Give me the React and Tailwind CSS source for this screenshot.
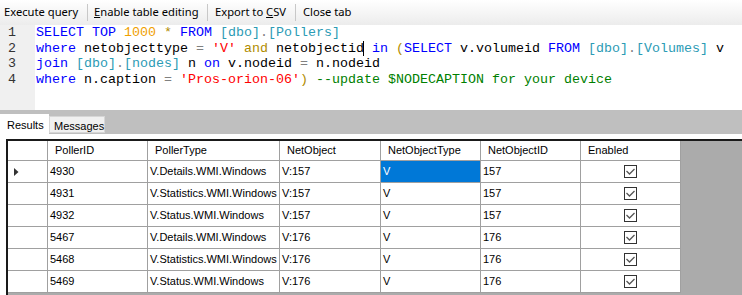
import React from "react";

const mono = { fontFamily: '"Liberation Mono", "Courier New", monospace' };
const sans = { fontFamily: '"Liberation Sans", Arial, sans-serif' };
const ui = { fontFamily: '"Noto Sans", "Segoe UI", sans-serif' };

const K = ({ children }) => <span className="text-[#0000ff]">{children}</span>;
const N = ({ children }) => <span className="text-[#f0a000]">{children}</span>;
const O = ({ children }) => <span className="text-[#b08c00]">{children}</span>;
const B = ({ children }) => <span className="text-[#2b9bb5]">{children}</span>;
const G = ({ children }) => <span className="text-[#808080]">{children}</span>;
const S = ({ children }) => <span className="text-[#ff0000]">{children}</span>;
const C = ({ children }) => <span className="text-[#008000]">{children}</span>;

const rows = [
  ["4930", "V.Details.WMI.Windows", "V:157", "V", "157"],
  ["4931", "V.Statistics.WMI.Windows", "V:157", "V", "157"],
  ["4932", "V.Status.WMI.Windows", "V:157", "V", "157"],
  ["5467", "V.Details.WMI.Windows", "V:176", "V", "176"],
  ["5468", "V.Statistics.WMI.Windows", "V:176", "V", "176"],
  ["5469", "V.Status.WMI.Windows", "V:176", "V", "176"],
];

const Sep = () => <div className="w-px h-[17px] bg-[#c8c8c8]" />;

const Check = () => (
  <div className="w-[13px] h-[13px] border border-[#333] bg-white flex items-center justify-center">
    <svg width="9" height="7" viewBox="0 0 9 7">
      <polyline points="0.5,3 3.5,6 8.5,1" fill="none" stroke="#555" strokeWidth="1.3" />
    </svg>
  </div>
);

const cell = "border-r border-b border-[#a0a0a0] flex items-center";

export default function App() {
  return (
    <div className="w-[742px] h-[295px] overflow-hidden bg-white flex flex-col text-black">
      {/* toolbar */}
      <div className="h-[25px] flex items-center pl-[4px] bg-gradient-to-b from-white to-[#ececec] text-[11.2px]" style={ui}>
        <span className="w-[83px]">Execute query</span>
        <Sep />
        <span className="ml-[6px] w-[113px]"><u>E</u>nable table editing</span>
        <Sep />
        <span className="ml-[7px] w-[80px]">Export to <u>C</u>SV</span>
        <Sep />
        <span className="ml-[7px]">Close tab</span>
      </div>

      {/* editor */}
      <div className="h-[85px] flex" style={mono}>
        <div className="w-[35px] bg-[#f0f0f0] pl-[8px] text-[13.33px] leading-[15.6px] text-[#333]">
          <div>1</div>
          <div>2</div>
          <div>3</div>
          <div>4</div>
        </div>
        <div className="pl-[1px] text-[13.33px] leading-[15.6px] whitespace-pre">
          <div>
            <K>SELECT</K> <K>TOP</K> <N>1000</N> <O>*</O> <K>FROM</K> <B>[dbo]</B><G>.</G><B>[Pollers]</B>
          </div>
          <div>
            <K>where</K> netobjecttype <G>=</G> <S>'V'</S> <O>and</O>{" "}
            <span className="relative">
              netobjectid
              <span className="absolute right-0 top-0 w-px h-full bg-black" />
            </span>{" "}
            <K>in</K> <O>(</O><K>SELECT</K> v.volumeid <K>FROM</K> <B>[dbo]</B><G>.</G><B>[Volumes]</B> v
          </div>
          <div>
            <K>join</K> <B>[dbo]</B><G>.</G><B>[nodes]</B> n <K>on</K> v.nodeid <G>=</G> n.nodeid
          </div>
          <div>
            <K>where</K> n.caption <G>=</G> <S>'Pros-orion-06'</S><O>)</O> <C>--update $NODECAPTION for your device</C>
          </div>
        </div>
      </div>

      {/* tab strip */}
      <div className="h-[24px] bg-[#bfbfbf] flex items-end text-[11px]" style={sans}>
        <div className="w-[49px] h-[20px] bg-white pl-[7px] pt-[3px]">Results</div>
        <div className="w-[56px] h-[17px] mb-px bg-[#f0f0f0] border border-[#d6d6d6] pl-[4px] pt-[1px]">Messages</div>
      </div>

      {/* grid */}
      <div className="flex-1 bg-white pt-[5px] pl-[6px] flex flex-col">
        <div className="flex-1 border-t-2 border-l-2 border-[#1a1a1a] bg-[#ababab] text-[11px]" style={sans}>
          <div className="grid grid-cols-[40px_100px_132px_101px_100px_100px_100px] w-[673px] bg-white">
            <div className={`${cell} h-[20px]`} />
            {["PollerID", "PollerType", "NetObject", "NetObjectType", "NetObjectID", "Enabled"].map((h) => (
              <div key={h} className={`${cell} h-[20px] pl-[7px]`}>{h}</div>
            ))}
            {rows.map((r, i) => (
              <React.Fragment key={r[0]}>
                <div className={`${cell} h-[22px] pl-[6px]`}>
                  {i === 0 && (
                    <svg width="5" height="8" viewBox="0 0 5 8">
                      <polygon points="0,0 4.5,4 0,8" fill="#333" />
                    </svg>
                  )}
                </div>
                <div className={`${cell} h-[22px] pl-[2px]`}>{r[0]}</div>
                <div className={`${cell} h-[22px] pl-[2px]`}>{r[1]}</div>
                <div className={`${cell} h-[22px] pl-[2px]`}>{r[2]}</div>
                <div className={`${cell} h-[22px] pl-[2px] ${i === 0 ? "bg-[#0078d7] text-white" : ""}`}>{r[3]}</div>
                <div className={`${cell} h-[22px] pl-[2px]`}>{r[4]}</div>
                <div className={`${cell} h-[22px] justify-center`}>
                  <Check />
                </div>
              </React.Fragment>
            ))}
          </div>
        </div>
      </div>
    </div>
  );
}
